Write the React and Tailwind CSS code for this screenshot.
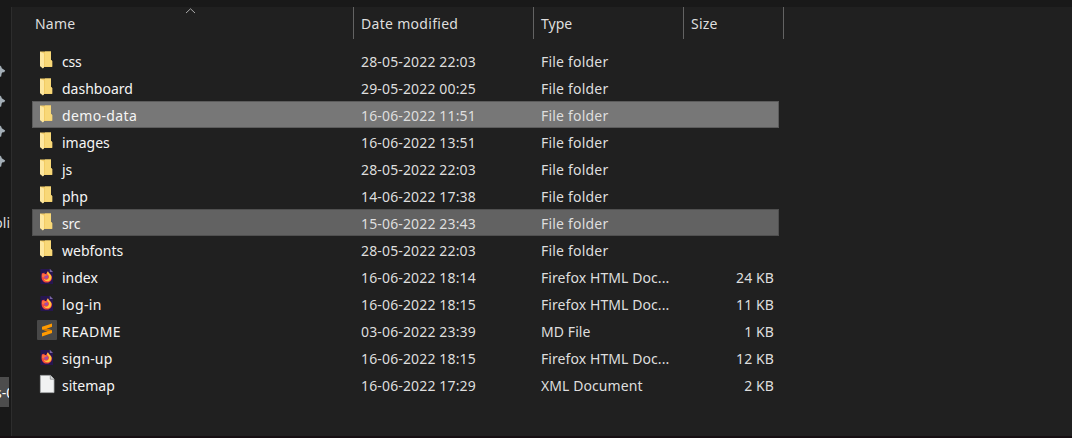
const rows = [
  ['folder', 'css', '28-05-2022 22:03', 'File folder', '', 'tracking-[-0.2px]'],
  ['folder', 'dashboard', '29-05-2022 00:25', 'File folder', ''],
  ['folder', 'demo-data', '16-06-2022 11:51', 'File folder', '', 'tracking-[0.35px]', 'border-[#5c5c5c] bg-[#777777]'],
  ['folder', 'images', '16-06-2022 13:51', 'File folder', ''],
  ['folder', 'js', '28-05-2022 22:03', 'File folder', ''],
  ['folder', 'php', '14-06-2022 17:38', 'File folder', ''],
  ['folder', 'src', '15-06-2022 23:43', 'File folder', '', 'tracking-[-0.2px]', 'border-[#505050] bg-[#626262]'],
  ['folder', 'webfonts', '28-05-2022 22:03', 'File folder', ''],
  ['firefox', 'index', '16-06-2022 18:14', 'Firefox HTML Doc...', '24 KB'],
  ['firefox', 'log-in', '16-06-2022 18:15', 'Firefox HTML Doc...', '11 KB', 'tracking-[0.4px]'],
  ['sublime', 'README', '03-06-2022 23:39', 'MD File', '1 KB', 'tracking-[0.5px]'],
  ['firefox', 'sign-up', '16-06-2022 18:15', 'Firefox HTML Doc...', '12 KB', 'tracking-[0.15px]'],
  ['page', 'sitemap', '16-06-2022 17:29', 'XML Document', '2 KB'],
];

function FolderIcon() {
  return (
    <svg className="h-[27px] w-5 shrink-0" viewBox="0 0 20 27">
      <path d="M3 3.5H14V12L15.2 13V19H5L3 18Z" fill="#f2cc66" />
      <path d="M8 3.5H14V12L15.2 13V18.5H8Z" fill="#f8d878" />
      <path d="M3 3.8L7 5.5V19.5L5.8 20.5L3 18Z" fill="#fde7a0" />
    </svg>
  );
}

function FirefoxIcon() {
  return (
    <svg className="h-[27px] w-5 shrink-0" viewBox="0 0 20 27">
      <path d="M3.5 5H13L16 8V20H3.5Z" fill="#261650" />
      <path d="M12.8 4.8V8H16Z" fill="#7a67a2" />
      <path d="M5 9C6 9.5 6.5 9 7.2 8.5C7.2 9.5 8 10 9 10L10.2 8.2L11 7.5C11 9 12.7 9.8 14 11C16.2 14 14.2 18.6 9.8 18.6C5.6 18.6 3.5 14.8 5 9Z" fill="#f5483d" />
      <path d="M10.2 8.2L11 7.3C11.2 9 13 9.6 14 11.5C15.3 14.3 13.4 17.3 10.3 17.3C8.4 17.3 7 16.3 6.8 14.8C8 16 10 16 11 15C12.8 13.2 12 11 10.2 10.2Z" fill="#ffc43d" />
      <circle cx="9.2" cy="12.8" r="1.9" fill="#9c4faa" />
      <path d="M5.2 10L8.4 10.3L10 11.4L7.7 12L6.7 13.5L5 13Z" fill="#ff7140" />
    </svg>
  );
}

function SublimeIcon() {
  return (
    <svg className="h-[27px] w-5 shrink-0" viewBox="0 0 20 27">
      <rect y="2" width="20" height="20" rx="1" fill="#484848" />
      <path d="M5 8.7L15 5.5V8.8L9.5 10.7L15 12.3V15.1L5 18.4V15.1L10.5 13.3L5 11.6Z" fill="#ff9a00" />
      <path d="M5 11.6L9.5 10.7L15 12.3L10.5 13.3Z" fill="#cf7805" />
    </svg>
  );
}

function PageIcon() {
  return (
    <svg className="h-[27px] w-5 shrink-0" viewBox="0 0 20 27">
      <path d="M3.4 3.4H13.5L17 7V20.6H3.4Z" fill="#f1f2f2" stroke="#aeb1b2" strokeWidth=".8" />
      <path d="M13.3 3.5V7.2H17" fill="#d9dcdc" stroke="#7c8082" strokeWidth=".7" />
    </svg>
  );
}

const icons = { folder: FolderIcon, firefox: FirefoxIcon, sublime: SublimeIcon, page: PageIcon };

function Pin() {
  return (
    <svg className="block h-[30px] w-[6px]" viewBox="0 0 6 30">
      <path d="M0 7.6L1.2 8.5L1.8 10.3L5.2 12.6L4.2 14.2L2.6 14.2L1.6 15.4L1.2 18.4L0 18.8Z" fill="#a4afb7" />
    </svg>
  );
}

function FileRow({ row }) {
  const [kind, name, date, type, size, tracking = '', selected = 'border-transparent'] = row;
  const Icon = icons[kind];
  return (
    <div className={`flex h-[27px] w-[747px] items-center border pl-1 pt-[2px] ${selected}`}>
      <Icon />
      <span className={`ml-[5px] w-[299px] shrink-0 text-[#f5f5f5] ${tracking}`}>{name}</span>
      <span className="w-[180px] shrink-0 tracking-[0.15px]">{date}</span>
      <span className={`w-[150px] shrink-0 whitespace-nowrap ${kind === 'folder' ? 'tracking-[0.2px]' : 'tracking-[0.08px]'}`}>{type}</span>
      <span className="w-[83px] shrink-0 text-right tracking-[0.1px]">{size}</span>
    </div>
  );
}

export default function App() {
  return (
    <div className="flex h-[438px] w-[1072px] flex-col overflow-hidden bg-[#202020] font-['Noto_Sans',sans-serif] text-[14px] leading-[25px] text-[#dedede]">
      <div className="h-[7px] shrink-0 bg-[#191919]" />
      <div className="flex h-[429px] shrink-0">
        <aside className="flex w-[10px] shrink-0 flex-col overflow-hidden bg-[#191919]">
          <div className="mt-[51px] h-[120px] shrink-0"><Pin /><Pin /><Pin /><Pin /></div>
          <div className="mt-[32px] flex h-[25px] shrink-0 justify-end whitespace-nowrap">oli</div>
          <div className="mt-[142px] flex h-[30px] w-[9px] shrink-0 items-center overflow-hidden bg-[#4d4d4d] text-white">
            <span className="ml-[-5px] whitespace-nowrap">s-0</span>
          </div>
        </aside>
        <div className="w-[2px] shrink-0 border-r border-[#2d2d2d] bg-[#191919]" />
        <main className="min-w-0 flex-1">
          <header className="flex h-8 w-[772px] leading-[33px]">
            <div className="flex w-[342px] shrink-0 border-r border-[#636363] pl-[23px]">
              <span className="w-[150px] tracking-[0.2px]">Name</span>
              <svg className="mt-px h-[6px] w-[11px]" viewBox="0 0 11 6"><path d="M1 5L5.5 .8L10 5" fill="none" stroke="#aaa" /></svg>
            </div>
            <div className="w-[180px] shrink-0 border-r border-[#636363] pl-[7px] tracking-[0.3px]">Date modified</div>
            <div className="w-[150px] shrink-0 border-r border-[#636363] pl-[7px]">Type</div>
            <div className="w-[100px] shrink-0 border-r border-[#636363] pl-[7px] tracking-[0.2px]">Size</div>
          </header>
          <div className="ml-5 mt-2">
            {rows.map((row) => <FileRow key={row[1]} row={row} />)}
          </div>
        </main>
      </div>
      <div className="h-[2px] shrink-0 bg-[#160f12]" />
    </div>
  );
}
